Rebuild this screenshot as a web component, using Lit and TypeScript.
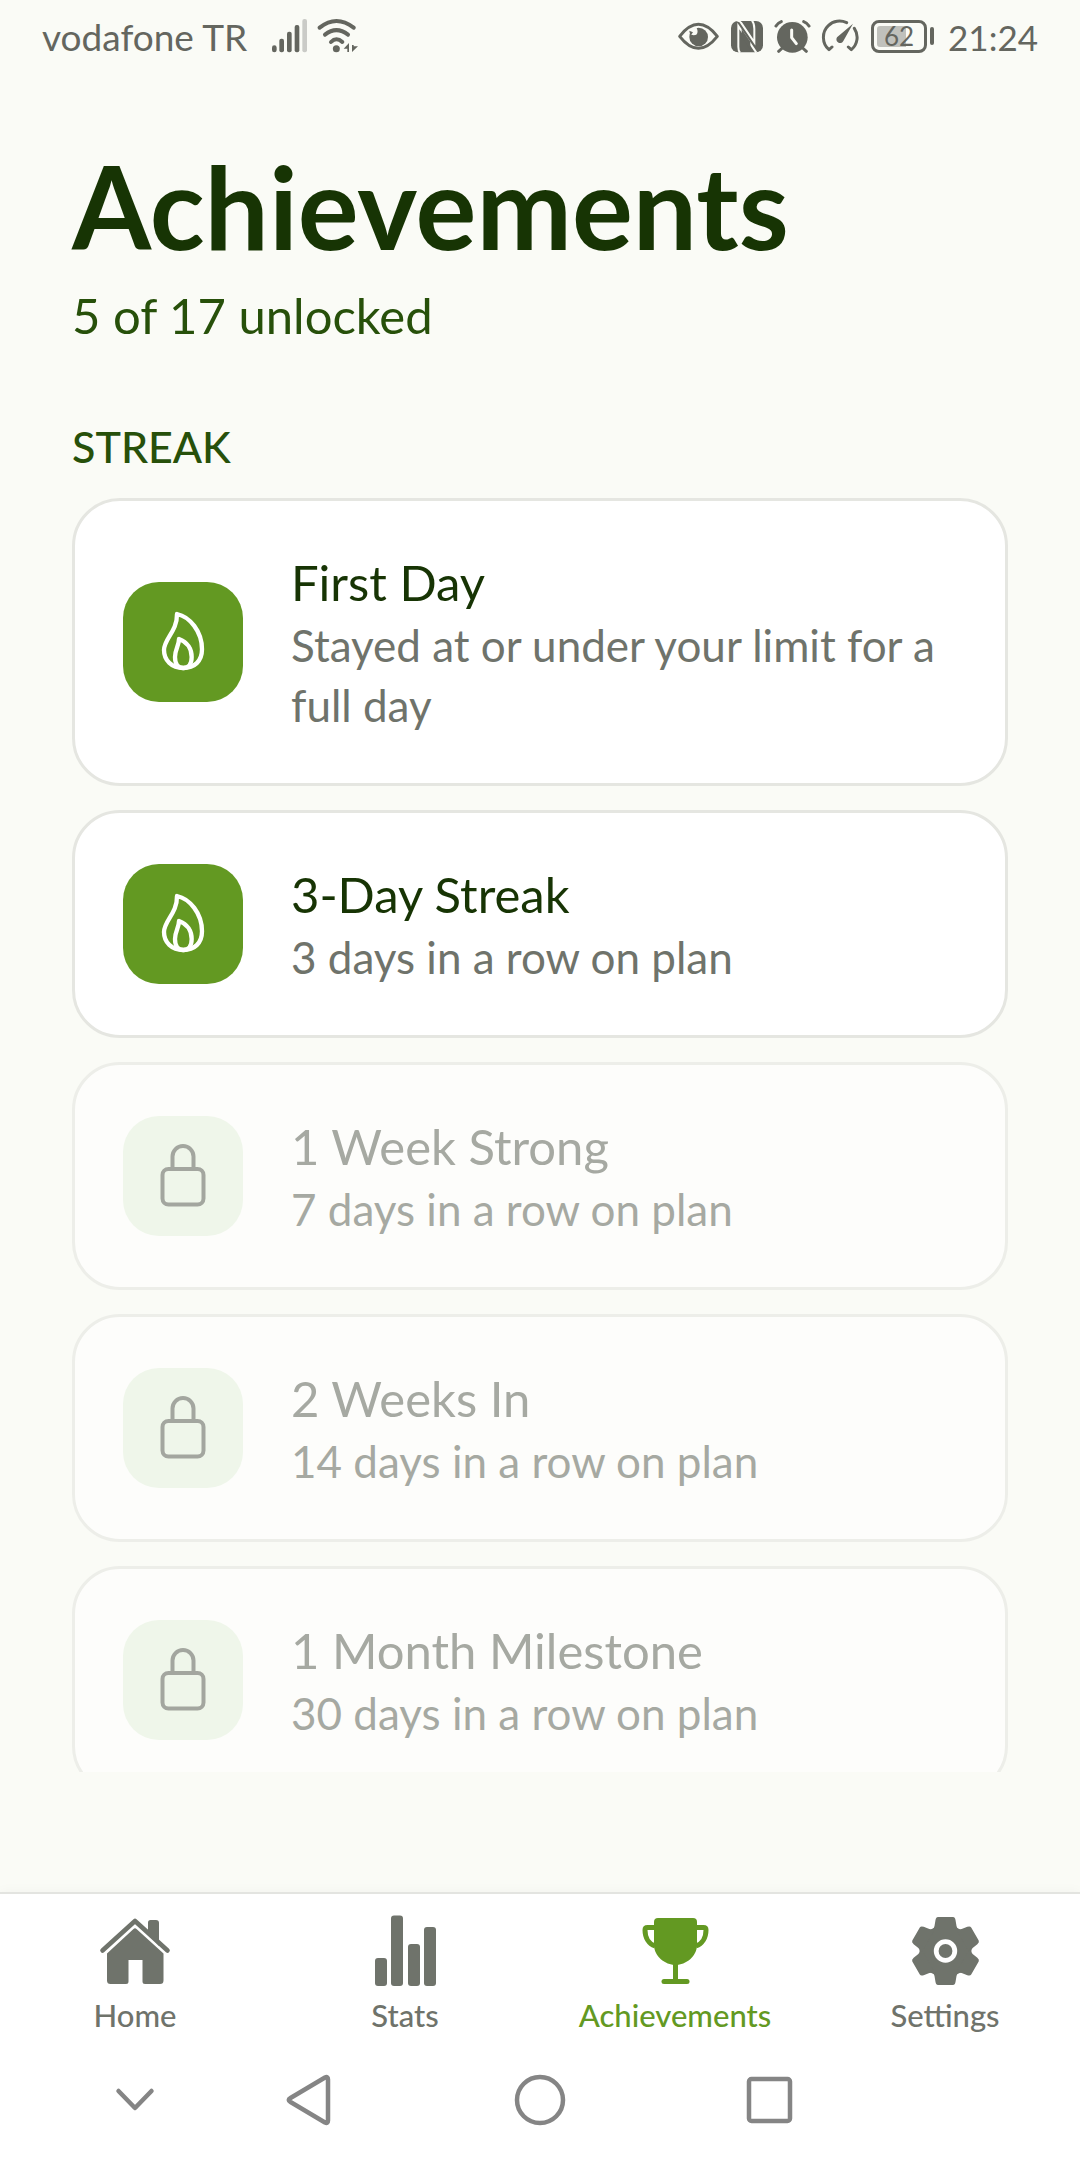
import { LitElement, html, css, svg } from "lit";
import { customElement, property } from "lit/decorators.js";
import { classMap } from "lit/directives/class-map.js";

interface Achievement {
  title: string;
  description: string;
  unlocked: boolean;
}

const STREAK: Achievement[] = [
  { title: "First Day", description: "Stayed at or under your limit for a full day", unlocked: true },
  { title: "3-Day Streak", description: "3 days in a row on plan", unlocked: true },
  { title: "1 Week Strong", description: "7 days in a row on plan", unlocked: false },
  { title: "2 Weeks In", description: "14 days in a row on plan", unlocked: false },
  { title: "1 Month Milestone", description: "30 days in a row on plan", unlocked: false },
];

const flame = html`<svg width="72" height="72" viewBox="0 0 216 216" fill="none" stroke="currentColor" stroke-width="13" stroke-linejoin="round" aria-hidden="true">
  <path d="M90 24C128 32 165 76 165 130C165 166 142 186 109 186C74 186 51 163 51 132C51 98 91 76 90 24Z" />
  <path d="M96 99C122 108 134 130 134 153C134 174 124 186 109 186C93 186 84 174 84 153C84 130 96 120 96 99Z" />
</svg>`;

const lock = html`<svg width="72" height="72" viewBox="0 0 72 72" fill="none" stroke="currentColor" stroke-width="4" aria-hidden="true">
  <rect x="15.500" y="29" width="41" height="35.500" rx="6" />
  <path d="M25.500 29V16.500a10.500 10.500 0 0 1 21 0V29" />
</svg>`;

const gearTooth =
  "M-7.5-34H7.5Q9.5-34 10-31L11-25Q12-21 15-20H-15Q-12-21-11-25L-10-31Q-9.500-34-7.500-34Z";

const navIcons = {
  home: svg`<path d="M49 7.500q0-2.500 2.500-2.500h5.500q3 0 3 3v23L49 19z" />
    <path d="M3.500 35.500L36 6L68.500 35.500" fill="none" stroke="currentColor" stroke-width="4.600" stroke-linecap="round" stroke-linejoin="round" />
    <path d="M34.500 14q1.500-1.500 3 0L64.500 38.500V65.500q0 3.500-3.500 3.500H46q-2.500 0-2.500-2.500V45H29.500v21.500q0 2.500-2.500 2.500H11.500q-3.500 0-3.500-3.500V38.500z" />`,
  stats: svg`<rect x="6" y="43" width="12" height="28" rx="3" />
    <rect x="22" y="0.500" width="12" height="70.500" rx="3" />
    <rect x="39" y="29" width="12" height="42" rx="3" />
    <rect x="55" y="12" width="12" height="59" rx="3" />`,
  trophy: svg`<path d="M19 3H54q4 0 4 4V30C58 41 47 50 36.500 50S15 41 15 30V7q0-4 4-4z" />
    <path d="M16 12.500H8.500q-2.500 0-2.500 2.500C6 23 10 29 16 31M57 12.500h7.500q2.500 0 2.500 2.500C67 23 63 29 57 31M36.500 48V66" fill="none" stroke="currentColor" stroke-width="5" />
    <rect x="22.500" y="64" width="28" height="5" rx="2.500" />`,
  gear: svg`<g transform="translate(36.500 36)">
      <circle r="26" />
      ${[0, 60, 120, 180, 240, 300].map((a) => svg`<path d=${gearTooth} transform="rotate(${a})" />`)}
      <circle r="9.300" fill="none" stroke="#fff" stroke-width="4.800" />
    </g>`,
};

type NavIcon = keyof typeof navIcons;

const TABS: { icon: NavIcon; label: string; active?: boolean }[] = [
  { icon: "home", label: "Home" },
  { icon: "stats", label: "Stats" },
  { icon: "trophy", label: "Achievements", active: true },
  { icon: "gear", label: "Settings" },
];

@customElement("status-bar")
export class StatusBar extends LitElement {
  static styles = css`
    :host {
      display: flex;
      align-items: center;
      justify-content: space-between;
      height: 72px;
      padding: 0 42px;
      color: #64665f;
      font-size: 37px;
      line-height: 48px;
    }
    .group {
      display: flex;
      align-items: center;
      gap: 10px;
    }
    svg {
      display: block;
    }
    .carrier,
    .clock {
      padding-top: 2px;
    }
    .carrier {
      margin-right: 15px;
    }
    .clock {
      margin-left: 4px;
      font-size: 35px;
    }
    .battery {
      display: flex;
      align-items: center;
      gap: 3px;
      margin-left: 2px;
    }
    .cell {
      box-sizing: border-box;
      width: 56px;
      height: 33px;
      border: 3px solid currentColor;
      border-radius: 8px;
      padding: 3px;
    }
    .level {
      display: flex;
      align-items: center;
      justify-content: center;
      height: 100%;
      font-size: 26px;
      line-height: 20px;
      background: linear-gradient(90deg, #c0c1bc 66%, transparent 66%);
      border-radius: 3px;
    }
    .cap {
      width: 4px;
      height: 18px;
      border-radius: 2px;
      background: currentColor;
    }
  `;

  render() {
    return html`
      <div class="group">
        <span class="carrier">vodafone TR</span>
        <svg width="35" height="36" viewBox="819 54 105 108" fill="currentColor" aria-label="Signal">
          <rect x="819" y="136" width="14" height="21" rx="7" />
          <rect x="841" y="116" width="14" height="41" rx="6" />
          <rect x="864" y="95" width="14" height="62" rx="6" />
          <rect x="887" y="75" width="14" height="82" rx="6" />
          <rect x="910" y="57" width="14" height="100" rx="6" fill="#cacbc7" />
        </svg>
        <svg width="41" height="36" viewBox="954 54 123 108" fill="currentColor" aria-label="Wi-Fi">
          <g fill="none" stroke="currentColor" stroke-width="12" stroke-linecap="round">
            <path d="M962 83Q1012 43 1064 83" />
            <path d="M978 104Q1012 77 1047 104" />
            <path d="M996 126Q1012 109 1030 126" />
          </g>
          <circle cx="1012" cy="146" r="10.500" />
          <path d="M1034 146L1050 129V156H1045V146zM1059 156V135H1064V139H1077z" />
        </svg>
      </div>
      <div class="group">
        <svg width="43" height="36" viewBox="54 54 129 108" aria-label="Eye comfort">
          <path d="M62 109Q118 37 175 109Q118 181 62 109Z" fill="none" stroke="currentColor" stroke-width="9" stroke-linejoin="round" />
          <circle cx="119" cy="111" r="28" fill="currentColor" />
          <path d="M90 96Q100 82 113 84Q119 96 112 104Q102 108 90 101z" fill="#fafbf6" />
          <path d="M91 92L102 97L94 108z" fill="currentColor" />
        </svg>
        <svg width="34" height="36" viewBox="213 54 102 108" aria-label="NFC">
          <rect x="216" y="63" width="96" height="94" rx="21" fill="currentColor" />
          <path d="M235 62Q243 62 246 68L286 127V86Q286 70 279 62M243 158Q238 152 238 140V78L292 158" fill="none" stroke="#fafbf6" stroke-width="6" />
          <path d="M248 87L274 125V150L248 112z" fill="currentColor" />
        </svg>
        <svg width="37" height="36" viewBox="345 54 111 108" aria-label="Alarm">
          <circle cx="400" cy="112" r="46" fill="currentColor" />
          <path d="M351 78Q356 69 367 65M434 65Q445 69 450 78M370 144L359 154M431 144L442 154" fill="none" stroke="currentColor" stroke-width="9" stroke-linecap="round" />
          <path d="M398 90V113L412 131" fill="none" stroke="#fafbf6" stroke-width="9" stroke-linecap="round" stroke-linejoin="round" />
        </svg>
        <svg width="38" height="36" viewBox="486 54 114 108" aria-label="Performance">
          <path d="M519 141L510 149C488 130 488 96 508 77C523 62 545 60 563 68M586 85C600 106 596 133 577 149L568 141" fill="none" stroke="currentColor" stroke-width="9" stroke-linecap="round" stroke-linejoin="round" />
          <path d="M582 71L553 123A11 11 0 1 1 534 112z" fill="currentColor" />
        </svg>
        <div class="battery">
          <div class="cell"><div class="level">62</div></div>
          <div class="cap"></div>
        </div>
        <time class="clock">21:24</time>
      </div>
    `;
  }
}

@customElement("achievement-card")
export class AchievementCard extends LitElement {
  @property({ attribute: false }) item!: Achievement;

  static styles = css`
    :host {
      display: block;
    }
    .card {
      display: flex;
      align-items: center;
      gap: 48px;
      padding: 48px;
      border: 3px solid #e5e6e1;
      border-radius: 48px;
      background: #fff;
    }
    .card.locked {
      opacity: 0.6;
    }
    .tile {
      display: flex;
      flex: none;
      align-items: center;
      justify-content: center;
      width: 120px;
      height: 120px;
      border-radius: 36px;
      background: #639922;
      color: #fff;
    }
    .locked .tile {
      background: #e9f4e3;
      color: #6b6f67;
    }
    .text {
      flex: 1;
      min-width: 0;
    }
    .title,
    .description {
      margin: 0;
      font-weight: 400;
    }
    .title {
      color: #173404;
      font-size: 49px;
      line-height: 66px;
    }
    .description {
      color: #6f736b;
      font-size: 44px;
      line-height: 60px;
    }
    .locked .title {
      color: #6f736b;
    }
  `;

  render() {
    const { title, description, unlocked } = this.item;
    return html`
      <article class=${classMap({ card: true, locked: !unlocked })}>
        <div class="tile">${unlocked ? flame : lock}</div>
        <div class="text">
          <h3 class="title">${title}</h3>
          <p class="description">${description}</p>
        </div>
      </article>
    `;
  }
}

@customElement("tab-bar")
export class TabBar extends LitElement {
  static styles = css`
    :host {
      display: block;
      background: #fff;
      border-top: 2px solid #e3e4e0;
      box-shadow: 0 0 12px rgba(0, 0, 0, 0.04);
    }
    .tabs {
      display: grid;
      grid-template-columns: repeat(4, 1fr);
      padding: 21px 0 7px;
    }
    .tab {
      display: flex;
      flex-direction: column;
      align-items: center;
      gap: 10px;
      color: #6f736b;
      font-size: 31px;
      font-weight: 500;
      line-height: 36px;
      text-decoration: none;
    }
    .tab.active {
      color: #639922;
    }
    svg {
      display: block;
    }
    .system {
      display: grid;
      grid-template-columns: 27fr 8fr 38fr 8fr 27fr;
      justify-items: center;
      padding: 30px 0;
    }
    .key {
      display: block;
      padding: 0;
      border: 0;
      background: none;
      color: #858585;
    }
  `;

  private key(label: string, shape: unknown) {
    return html`<button class="key" aria-label=${label}>
      <svg width="60" height="60" viewBox="0 0 60 60" fill="none" stroke="currentColor" stroke-width="4.500" stroke-linecap="round" stroke-linejoin="round">${shape}</svg>
    </button>`;
  }

  render() {
    return html`
      <nav class="tabs">
        ${TABS.map(
          (t) => html`<a href="#${t.label.toLowerCase()}" class=${classMap({ tab: true, active: !!t.active })}>
            <svg width="72" height="72" viewBox="0 0 72 72" fill="currentColor" aria-hidden="true">${navIcons[t.icon]}</svg>
            <span>${t.label}</span>
          </a>`,
        )}
      </nav>
      <div class="system">
        ${this.key("Hide", svg`<path d="M13.500 21L30 38L46.500 21" />`)}
        ${this.key("Back", svg`<path d="M48 9.500Q48 6 45 7.500L10.500 28Q7 30 10.500 32L45 52.500Q48 54 48 50.500Z" />`)}
        ${this.key("Home", svg`<circle cx="30" cy="30" r="23" />`)}
        ${this.key("Recents", svg`<rect x="9" y="9" width="41" height="42" rx="2.500" />`)}
      </div>
    `;
  }
}

@customElement("app-root")
export class AppRoot extends LitElement {
  static styles = css`
    :host {
      display: flex;
      flex-direction: column;
      height: 100vh;
      background: #fafbf6;
      font-family: Lato, "Open Sans", "Liberation Sans", sans-serif;
    }
    .content {
      flex: 1;
      min-height: 0;
      margin-bottom: 120px;
      padding: 74px 72px 0;
      overflow-y: auto;
      scrollbar-width: none;
    }
    .heading {
      margin: 0;
      color: #173404;
      font-size: 114px;
      font-weight: 700;
      line-height: 120px;
    }
    .summary {
      margin: 19px 0 0;
      color: #27500a;
      font-size: 49px;
      line-height: 60px;
    }
    .section {
      margin: 78px 0 27px;
      color: #27500a;
      font-size: 43px;
      font-weight: 500;
      line-height: 48px;
    }
    .list {
      display: grid;
      gap: 24px;
    }
  `;

  render() {
    return html`
      <status-bar></status-bar>
      <main class="content">
        <h1 class="heading">Achievements</h1>
        <p class="summary">5 of 17 unlocked</p>
        <h2 class="section">STREAK</h2>
        <div class="list">
          ${STREAK.map((item) => html`<achievement-card .item=${item}></achievement-card>`)}
        </div>
      </main>
      <tab-bar></tab-bar>
    `;
  }
}
